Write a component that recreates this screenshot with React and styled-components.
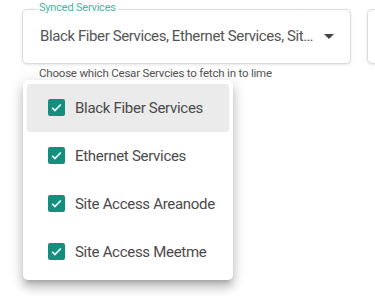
import React from "react";
import styled, { createGlobalStyle } from "styled-components";

const Global = createGlobalStyle`
  html, body { margin: 0; padding: 0; background: #fff; }
  body { font-family: Roboto, "Noto Sans", Arial, sans-serif; }
`;

const Page = styled.div`
  position: relative;
  width: 375px;
  height: 296px;
  overflow: hidden;
  padding: 9px 0 0 22px;
  box-sizing: border-box;
`;

const FieldRow = styled.div`
  display: flex;
  gap: 16px;
`;

const Column = styled.div`
  display: flex;
  flex-direction: column;
`;

const Field = styled.div`
  position: relative;
  flex: none;
  width: ${(p) => p.$width}px;
  height: 55px;
  box-sizing: border-box;
  border: 1px solid #dcdcdc;
  border-radius: 5px;
  box-shadow: 0 1px 3px rgba(0, 0, 0, 0.1);
  display: flex;
  align-items: center;
  padding: 0 9px 2px 17px;
  background: #fff;
`;

const Label = styled.span`
  position: absolute;
  top: -9px;
  left: 14px;
  padding: 0 2px;
  background: #fff;
  font-size: 11px;
  letter-spacing: -0.2px;
  line-height: 14px;
  color: #45b5a5;
`;

const Value = styled.span`
  flex: 1;
  font-size: 15px;
  letter-spacing: -0.4px;
  color: #555;
  white-space: nowrap;
`;

const Arrow = styled.svg`
  width: 24px;
  height: 24px;
  fill: #444;
  flex: none;
`;

const Helper = styled.div`
  margin: 2px 0 0 17px;
  font-size: 11.5px;
  letter-spacing: -0.2px;
  line-height: 14px;
  color: #555;
`;

const Menu = styled.ul`
  position: absolute;
  left: 23px;
  top: 80px;
  width: 210px;
  margin: 0;
  padding: 4px;
  box-sizing: border-box;
  list-style: none;
  background: #fff;
  border-radius: 5px;
  box-shadow: 0 5px 5px -3px rgba(0, 0, 0, 0.2), 0 8px 10px 1px rgba(0, 0, 0, 0.14),
    0 3px 14px 2px rgba(0, 0, 0, 0.12);
`;

const Item = styled.li`
  height: 48px;
  display: flex;
  align-items: center;
  gap: 10px;
  padding: 0 0 1px 21px;
  box-sizing: border-box;
  border-radius: 3px;
  background: ${(p) => (p.$active ? "#ebebeb" : "transparent")};
  font-size: 15px;
  letter-spacing: -0.3px;
  white-space: nowrap;
  color: #4a4a4a;
`;

const Box = styled.span`
  width: 17px;
  height: 17px;
  border-radius: 2px;
  background: #138f7f;
  display: flex;
  align-items: center;
  justify-content: center;
  flex: none;
`;

const items = [
  "Black Fiber Services",
  "Ethernet Services",
  "Site Access Areanode",
  "Site Access Meetme",
];

export default function App() {
  return (
    <>
      <Global />
      <Page>
        <FieldRow>
          <Column>
            <Field $width={329}>
              <Label>Synced Services</Label>
              <Value>Black Fiber Services, Ethernet Services, Sit…</Value>
              <Arrow viewBox="0 0 24 24">
                <path d="M7 10l5 5 5-5z" />
              </Arrow>
            </Field>
            <Helper>Choose which Cesar Servcies to fetch in to lime</Helper>
          </Column>
          <Field $width={100} />
        </FieldRow>
        <Menu>
          {items.map((t, i) => (
            <Item key={t} $active={i === 0}>
              <Box>
                <svg width="13" height="13" viewBox="0 0 24 24">
                  <path
                    d="M4 12.5l5 5L20 6.5"
                    fill="none"
                    stroke="#fff"
                    strokeWidth="3"
                  />
                </svg>
              </Box>
              {t}
            </Item>
          ))}
        </Menu>
      </Page>
    </>
  );
}
